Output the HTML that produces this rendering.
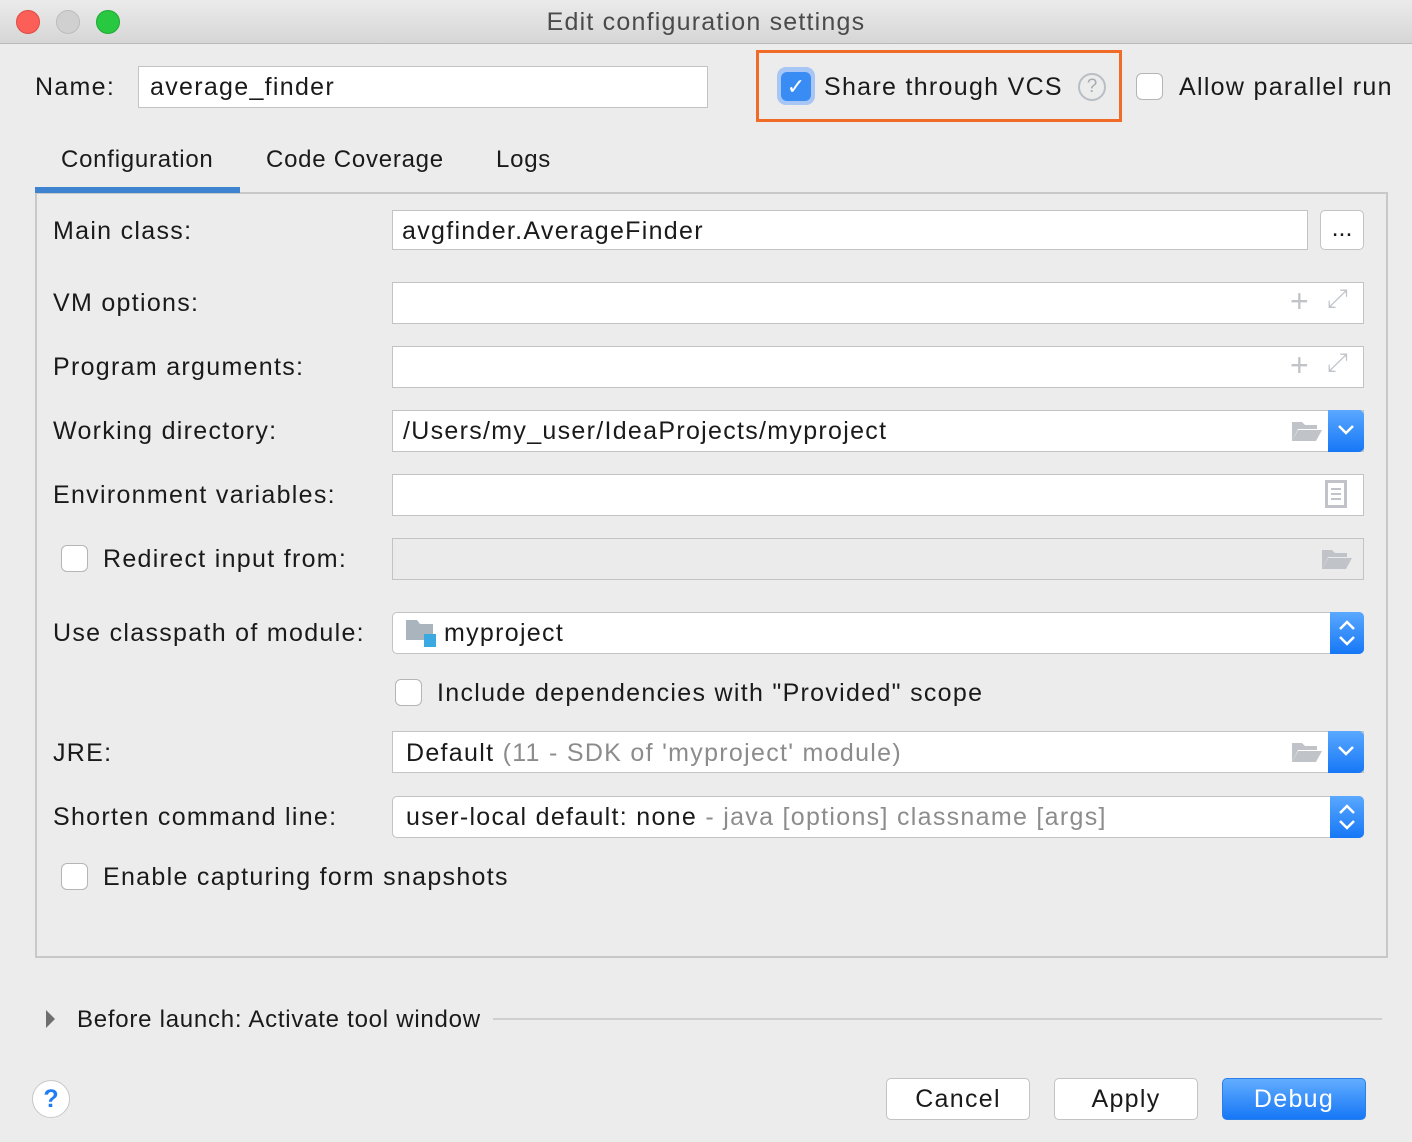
<!DOCTYPE html>
<html><head><meta charset="utf-8"><style>
*{box-sizing:border-box;margin:0;padding:0}
body{width:1412px;height:1142px;background:#ececec;font-family:"Liberation Sans",sans-serif;font-size:25px;letter-spacing:1.3px;color:#1a1a1a;position:relative;overflow:hidden}
.a{position:absolute;white-space:nowrap}
.f{position:absolute;background:#fff;border:1px solid #c3c3c3}
.cb{position:absolute;width:27px;height:27px;border:1px solid #b5b5b5;border-radius:6px;background:#fff}
.g{color:#8c8c8c}
.s{font-size:24px;letter-spacing:0.75px}
.blue{position:absolute;background:linear-gradient(#5aa8ff,#1677f6);border-radius:0 5px 5px 0}
.btn{position:absolute;height:42px;border:1px solid #c3c3c3;border-radius:5px;background:#fff;text-align:center;line-height:40px}
</style></head><body>
<div class="a" style="left:0;top:0;width:1412px;height:44px;background:linear-gradient(#ebebeb,#d6d6d6);border-bottom:1px solid #b9b9b9"></div>
<div class="a" style="left:16px;top:10px;width:24px;height:24px;border-radius:50%;background:#fc5f57;border:1px solid #de4a42"></div>
<div class="a" style="left:56px;top:10px;width:24px;height:24px;border-radius:50%;background:#d0d0d0;border:1px solid #bcbcbc"></div>
<div class="a" style="left:96px;top:10px;width:24px;height:24px;border-radius:50%;background:#28c840;border:1px solid #1ea933"></div>
<div class="a" style="left:0;width:1412px;top:8px;text-align:center;color:#4a4a4a;letter-spacing:1.2px">Edit configuration settings</div>

<div class="a" style="left:35px;top:73px">Name:</div>
<div class="f" style="left:138px;top:66px;width:570px;height:42px"></div>
<div class="a" style="left:150px;top:73px">average_finder</div>
<div class="a" style="left:756px;top:50px;width:366px;height:72px;border:3px solid #f06a28"></div>
<div class="a" style="left:777px;top:67px;width:38px;height:38px;border-radius:9px;background:#a7c6f5"></div>
<div class="a" style="left:781px;top:72px;width:30px;height:29px;border-radius:6px;background:#3a8cf5;color:#fff;text-align:center;line-height:29px;font-size:22px;letter-spacing:0">✓</div>
<div class="a" style="left:824px;top:73px">Share through VCS</div>
<div class="a" style="left:1078px;top:73px;width:28px;height:28px;border:2px solid #b9bec4;border-radius:50%;color:#a7adb3;font-size:19px;text-align:center;line-height:24px;letter-spacing:0">?</div>
<div class="cb" style="left:1136px;top:73px"></div>
<div class="a" style="left:1179px;top:73px">Allow parallel run</div>

<div class="a s" style="left:61px;top:146px">Configuration</div>
<div class="a s" style="left:266px;top:146px">Code Coverage</div>
<div class="a s" style="left:496px;top:146px">Logs</div>
<div class="a" style="left:35px;top:192px;width:1353px;height:766px;border:2px solid #c8c8c8"></div>
<div class="a" style="left:35px;top:187px;width:205px;height:6px;background:#3d83d0"></div>

<div class="a" style="left:53px;top:217px">Main class:</div>
<div class="f" style="left:392px;top:210px;width:916px;height:40px"></div>
<div class="a" style="left:402px;top:217px">avgfinder.AverageFinder</div>
<div class="btn" style="left:1320px;top:210px;width:44px;height:40px;line-height:34px;letter-spacing:0">...</div>

<div class="a" style="left:53px;top:289px">VM options:</div>
<div class="f" style="left:392px;top:282px;width:972px;height:42px"></div>
<div class="a" style="left:1290px;top:283px;color:#c0c4c8;font-size:32px">+</div>
<div class="a" style="left:1327px;top:283px;color:#c0c4c8;font-size:26px">⤢</div>
<div class="a" style="left:53px;top:353px">Program arguments:</div>
<div class="f" style="left:392px;top:346px;width:972px;height:42px"></div>
<div class="a" style="left:1290px;top:347px;color:#c0c4c8;font-size:32px">+</div>
<div class="a" style="left:1327px;top:347px;color:#c0c4c8;font-size:26px">⤢</div>

<div class="a" style="left:53px;top:417px">Working directory:</div>
<div class="f" style="left:392px;top:410px;width:972px;height:42px"></div>
<div class="a" style="left:403px;top:417px">/Users/my_user/IdeaProjects/myproject</div>
<svg class="a" style="left:1291px;top:420px" width="32" height="22"><path d="M1 2h10l3 3h12v4H7L1 21z" fill="#c0c4c8"/><path d="M7 10h24l-6 11H1z" fill="#c0c4c8"/></svg>
<div class="blue" style="left:1328px;top:410px;width:36px;height:42px"></div>
<svg class="a" style="left:1337px;top:424px" width="18" height="12"><path d="M2 2l7 7 7-7" stroke="#fff" stroke-width="2.5" fill="none"/></svg>

<div class="a" style="left:53px;top:481px">Environment variables:</div>
<div class="f" style="left:392px;top:474px;width:972px;height:42px"></div>
<svg class="a" style="left:1325px;top:480px" width="24" height="30"><rect x="1.5" y="1.5" width="19" height="25" fill="none" stroke="#c0c4c8" stroke-width="3"/><path d="M6 9h10M6 14h10M6 19h10" stroke="#c0c4c8" stroke-width="2"/></svg>

<div class="cb" style="left:61px;top:545px"></div>
<div class="a" style="left:103px;top:545px">Redirect input from:</div>
<div class="a" style="left:392px;top:538px;width:972px;height:42px;border:1px solid #c3c3c3;background:#ebebeb"></div>
<svg class="a" style="left:1321px;top:548px" width="32" height="22"><path d="M1 2h10l3 3h12v4H7L1 21z" fill="#c0c4c8"/><path d="M7 10h24l-6 11H1z" fill="#c0c4c8"/></svg>

<div class="a" style="left:53px;top:619px">Use classpath of module:</div>
<div class="f" style="left:392px;top:612px;width:972px;height:42px;border-radius:5px"></div>
<svg class="a" style="left:405px;top:619px" width="32" height="30"><path d="M1 1h11l3 4h13v16H1z" fill="#aab4bd"/><rect x="19" y="15" width="12" height="13" fill="#3aa9e1"/></svg>
<div class="a" style="left:444px;top:619px">myproject</div>
<div class="blue" style="left:1330px;top:612px;width:34px;height:42px"></div>
<svg class="a" style="left:1338px;top:618px" width="18" height="30"><path d="M2 11l7-7 7 7M2 19l7 7 7-7" stroke="#fff" stroke-width="2.5" fill="none"/></svg>

<div class="cb" style="left:395px;top:679px"></div>
<div class="a" style="left:437px;top:679px">Include dependencies with "Provided" scope</div>

<div class="a" style="left:53px;top:739px">JRE:</div>
<div class="f" style="left:392px;top:731px;width:972px;height:42px"></div>
<div class="a" style="left:406px;top:739px">Default <span class="g">(11 - SDK of 'myproject' module)</span></div>
<svg class="a" style="left:1291px;top:741px" width="32" height="22"><path d="M1 2h10l3 3h12v4H7L1 21z" fill="#c0c4c8"/><path d="M7 10h24l-6 11H1z" fill="#c0c4c8"/></svg>
<div class="blue" style="left:1328px;top:731px;width:36px;height:42px"></div>
<svg class="a" style="left:1337px;top:745px" width="18" height="12"><path d="M2 2l7 7 7-7" stroke="#fff" stroke-width="2.5" fill="none"/></svg>

<div class="a" style="left:53px;top:803px">Shorten command line:</div>
<div class="f" style="left:392px;top:796px;width:972px;height:42px;border-radius:5px"></div>
<div class="a" style="left:406px;top:803px">user-local default: none <span class="g">- java [options] classname [args]</span></div>
<div class="blue" style="left:1330px;top:796px;width:34px;height:42px"></div>
<svg class="a" style="left:1338px;top:802px" width="18" height="30"><path d="M2 11l7-7 7 7M2 19l7 7 7-7" stroke="#fff" stroke-width="2.5" fill="none"/></svg>

<div class="cb" style="left:61px;top:863px"></div>
<div class="a" style="left:103px;top:863px">Enable capturing form snapshots</div>

<svg class="a" style="left:45px;top:1009px" width="12" height="20"><path d="M1 1l9 9-9 9z" fill="#6e6e6e"/></svg>
<div class="a s" style="left:77px;top:1006px">Before launch: Activate tool window</div>
<div class="a" style="left:493px;top:1018px;width:889px;height:2px;background:#cfcfcf"></div>

<div class="a" style="left:32px;top:1080px;width:38px;height:38px;border-radius:50%;background:#fff;border:1px solid #c8c8c8;color:#1f7cf5;text-align:center;line-height:36px;font-size:25px;font-weight:bold;letter-spacing:0">?</div>
<div class="btn" style="left:886px;top:1078px;width:144px">Cancel</div>
<div class="btn" style="left:1054px;top:1078px;width:144px">Apply</div>
<div class="btn" style="left:1222px;top:1078px;width:144px;background:linear-gradient(#62adff,#1677f6);border-color:#2a7fe8;color:#fff">Debug</div>
</body></html>
